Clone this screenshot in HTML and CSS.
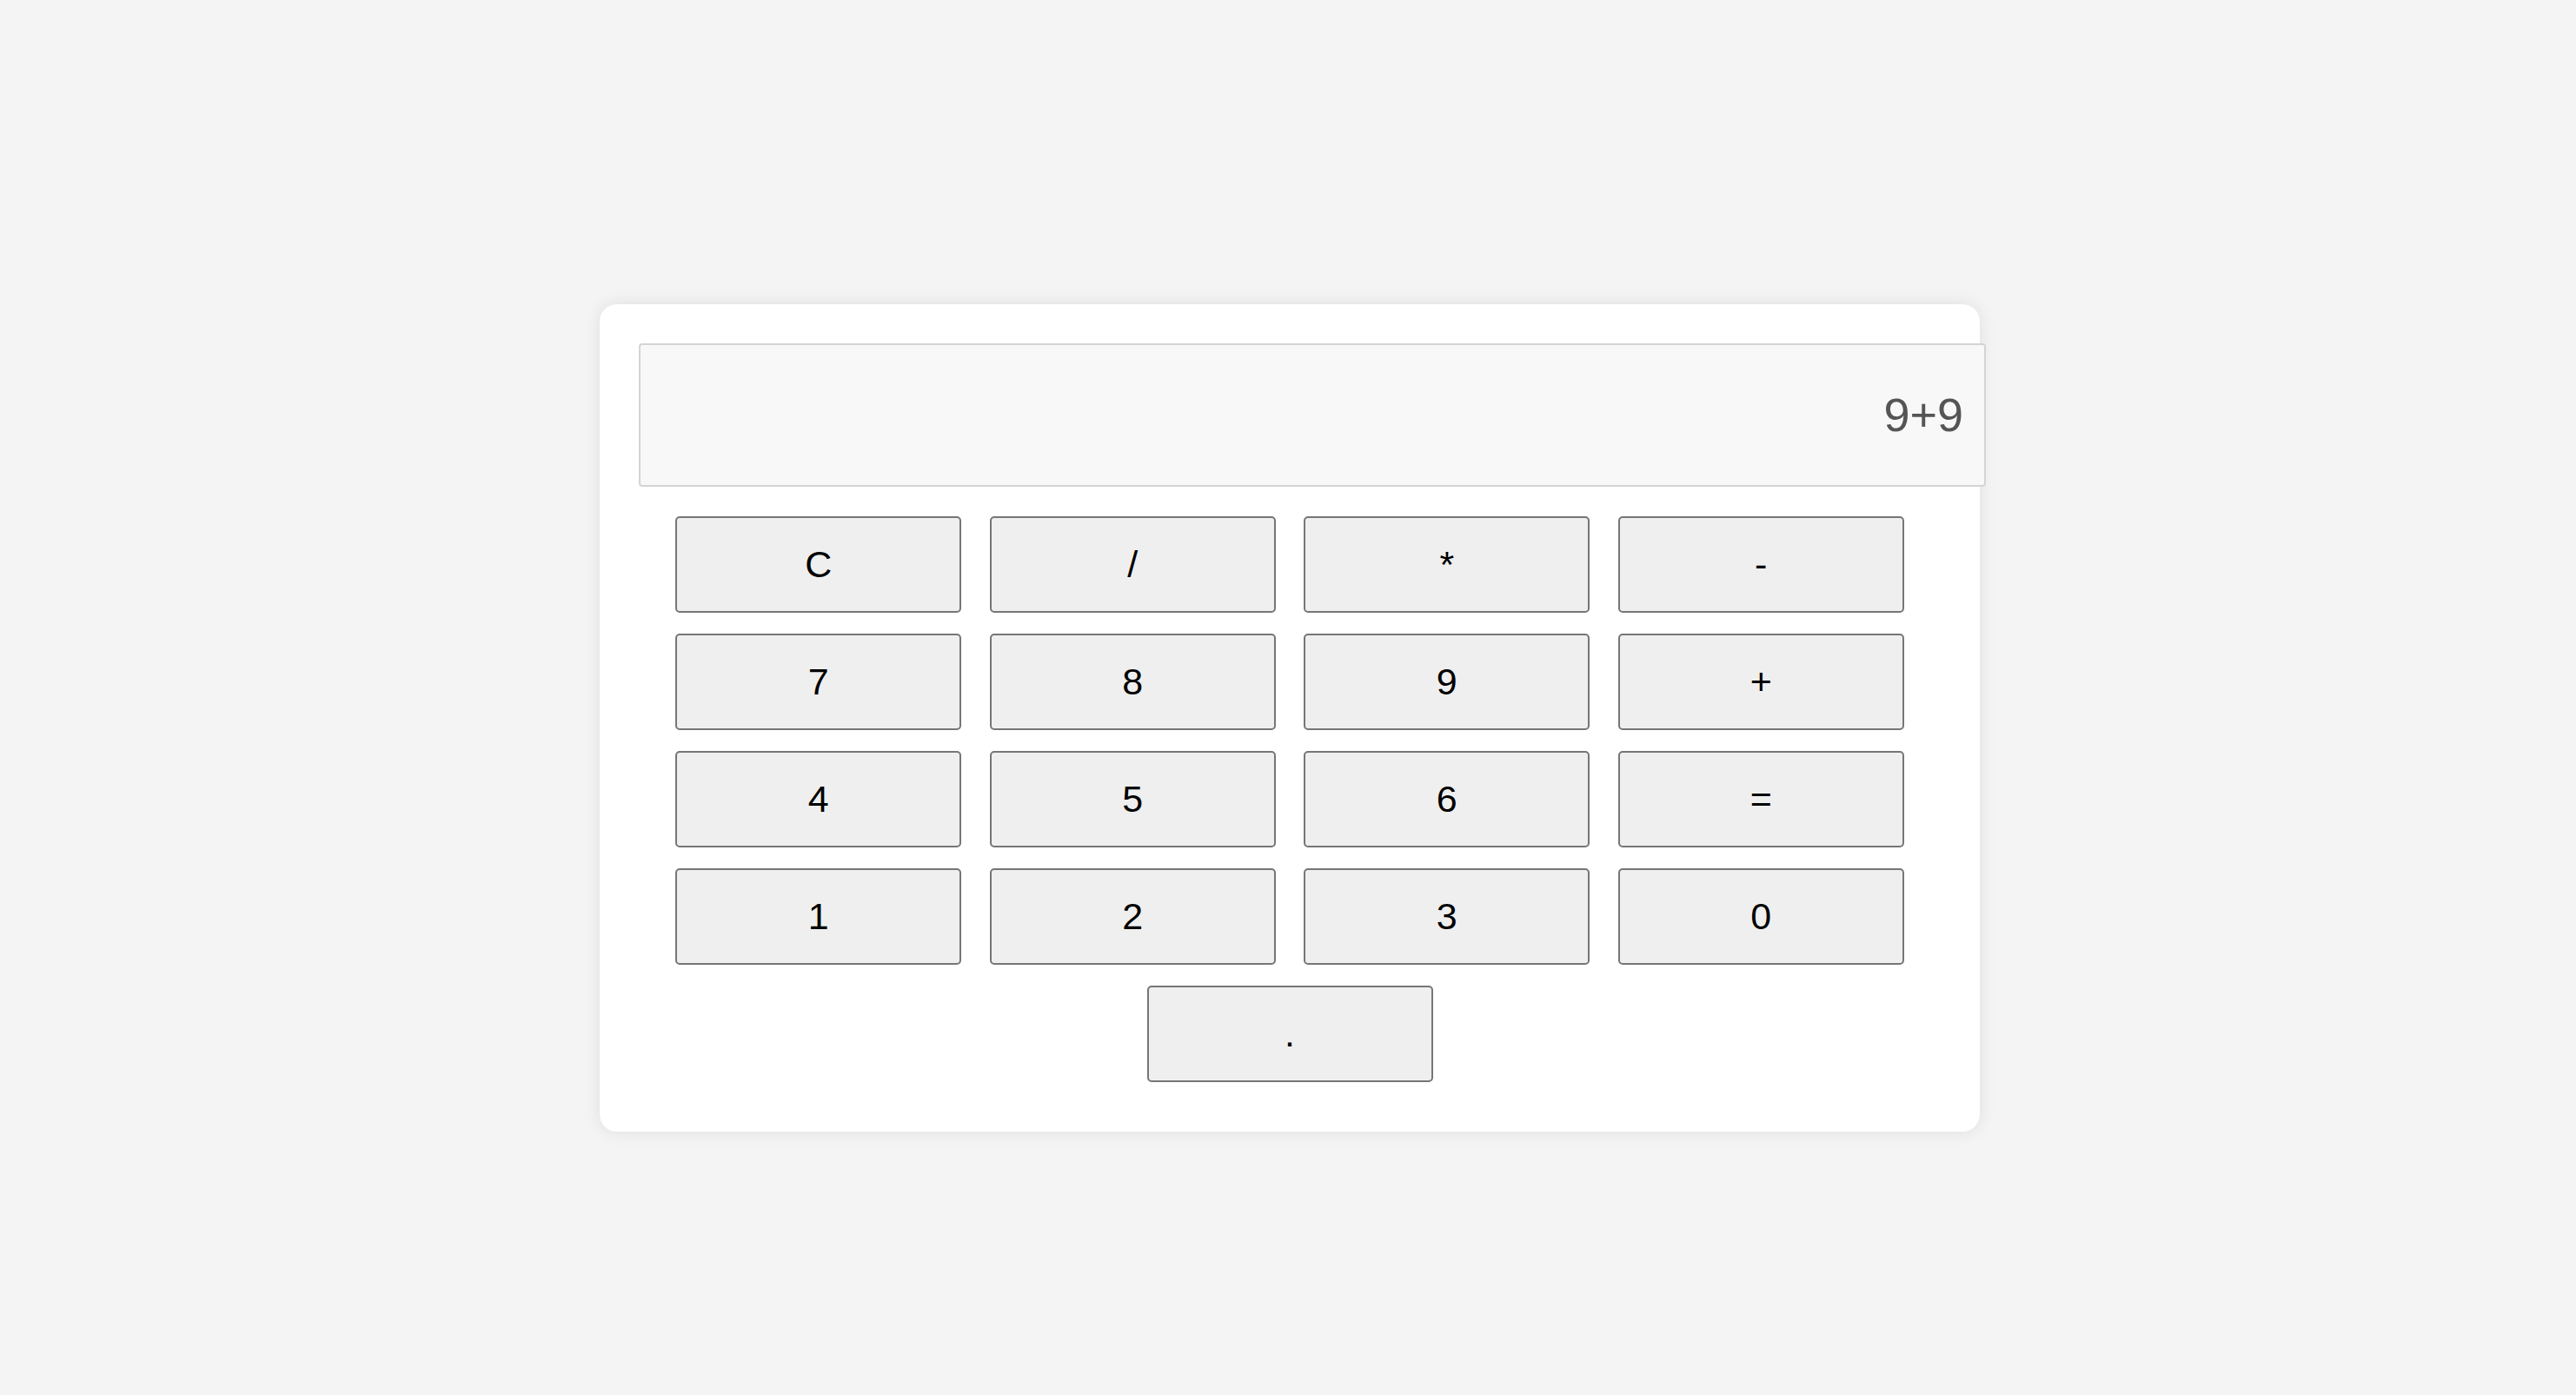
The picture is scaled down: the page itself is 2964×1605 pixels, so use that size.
FILE: index.html
```html
<!DOCTYPE html>
<html lang="en">
<head>
<meta charset="utf-8">
<title>Calculator</title>
<link rel="stylesheet" href="styles.css">
</head>
<body>
<div class="page">
  <div class="calculator">
    <div class="display">9+9</div>
    <div class="keys">
      <button class="key">C</button>
      <button class="key">/</button>
      <button class="key">*</button>
      <button class="key">-</button>
      <button class="key">7</button>
      <button class="key">8</button>
      <button class="key">9</button>
      <button class="key">+</button>
      <button class="key">4</button>
      <button class="key">5</button>
      <button class="key">6</button>
      <button class="key">=</button>
      <button class="key">1</button>
      <button class="key">2</button>
      <button class="key">3</button>
      <button class="key">0</button>
      <button class="key">.</button>
    </div>
  </div>
</div>
</body>
</html>
```
FILE: styles.css
```css
html, body {
  margin: 0;
  padding: 0;
  background: #f4f4f4;
  font-family: "Liberation Sans", Arial, sans-serif;
}

.page {
  display: flex;
  justify-content: center;
  padding: 350px 0 0 4px;
  min-height: 1605px;
  box-sizing: border-box;
}

.calculator {
  box-sizing: border-box;
  width: 1588px;
  height: 952px;
  padding: 45px 45px 57px 45px;
  background: #ffffff;
  border-radius: 20px;
  box-shadow: 0 0 20px rgba(0, 0, 0, 0.09);
}

.display {
  box-sizing: border-box;
  width: 1550px;
  height: 165px;
  display: flex;
  align-items: center;
  justify-content: flex-end;
  padding: 0 24px 2px 0;
  background: #f8f8f8;
  border: 2px solid #d4d4d4;
  border-radius: 4px;
  color: #555555;
  font-size: 54px;
}

.keys {
  margin-top: 34px;
  display: flex;
  flex-wrap: wrap;
  justify-content: center;
  column-gap: 32.5px;
  row-gap: 24px;
}

.key {
  box-sizing: border-box;
  width: 329px;
  height: 111px;
  margin: 0;
  padding: 0;
  background: #efefef;
  border: 2px solid #767676;
  border-radius: 5px;
  color: #000000;
  font-family: "Liberation Sans", Arial, sans-serif;
  font-size: 43px;
  line-height: 1;
}
```
